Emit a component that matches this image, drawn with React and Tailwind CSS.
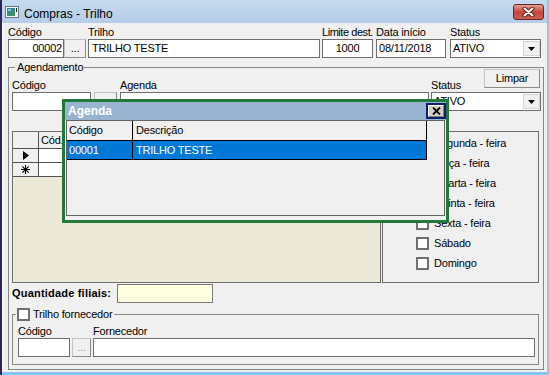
import React from "react";

const FONT = "font-['Liberation_Sans',Arial,sans-serif]";

function DownTri() {
  return (
    <svg width="7" height="4" viewBox="0 0 7 4">
      <path d="M0 0h7L3.5 4z" fill="#000" />
    </svg>
  );
}

function Field({ label, className = "", labelClass = "", children }) {
  return (
    <div className={`flex flex-col ${className}`}>
      <div className={`h-[13px] whitespace-nowrap ${labelClass}`}>{label}</div>
      {children}
    </div>
  );
}

function Input({ className = "", children }) {
  return (
    <div className={`h-[19px] border border-[#6e6e6e] bg-white flex items-center whitespace-nowrap overflow-hidden ${className}`}>
      {children}
    </div>
  );
}

function Select({ className = "", children }) {
  return (
    <div className={`h-[19px] border border-[#6e6e6e] bg-white flex items-center pl-[2px] ${className}`}>
      <span className="flex-1">{children}</span>
      <div className="w-[17px] h-[15px] bg-[#f0f0f0] border border-[#d4d4d4] flex items-center justify-center">
        <DownTri />
      </div>
    </div>
  );
}

function Btn({ className = "", disabled = false, children = "..." }) {
  return (
    <div
      className={`h-[19px] border border-[#c2c2c2] border-r-[#8a8a8a] border-b-[#8a8a8a] bg-[#f0f0f0] flex items-center justify-center ${
        disabled ? "text-[#a0a0a0]" : ""
      } ${className}`}
    >
      {children}
    </div>
  );
}

function Check() {
  return <div className="w-[13px] h-[13px] shrink-0 border-2 border-[#6f6f6f] bg-white" />;
}

function AppIcon() {
  return (
    <svg width="14" height="12" viewBox="0 0 14 12" className="mt-[6px] shrink-0">
      <defs>
        <linearGradient id="ig" x1="0" y1="0" x2="1" y2="1">
          <stop offset="0" stopColor="#2e7bb4" />
          <stop offset="1" stopColor="#3e9a55" />
        </linearGradient>
      </defs>
      <rect x="0.5" y="0.5" width="13" height="11" fill="#f6f6f6" stroke="#6b7683" />
      <rect x="2" y="2" width="8" height="8" fill="url(#ig)" />
      <rect x="3" y="3" width="3" height="2" fill="#8fc6d8" />
      <rect x="11" y="2" width="1" height="4" fill="#222" />
    </svg>
  );
}

function CloseBtn() {
  return (
    <div className="ml-auto mt-[4px] mr-[3px] w-[31px] h-[16px] rounded-[3px] border border-[#6a2520] bg-gradient-to-b from-[#e2a093] via-[#c5463a] to-[#cf5e4e] flex items-center justify-center">
      <svg width="13" height="10" viewBox="0 0 13 10">
        <path d="M2.5 1.5 L10.5 8.5 M10.5 1.5 L2.5 8.5" stroke="#5a1a15" strokeWidth="4" strokeLinecap="round" />
        <path d="M2.5 1.5 L10.5 8.5 M10.5 1.5 L2.5 8.5" stroke="#fff" strokeWidth="2" strokeLinecap="round" />
      </svg>
    </div>
  );
}

function RowTri() {
  return (
    <svg width="6" height="9" viewBox="0 0 6 9">
      <path d="M0 0L6 4.5L0 9z" fill="#000" />
    </svg>
  );
}

function Star() {
  return (
    <svg width="9" height="9" viewBox="0 0 9 9">
      <path d="M4.5 0V9M0 4.5H9M1.3 1.3L7.7 7.7M7.7 1.3L1.3 7.7" stroke="#000" strokeWidth="1.1" />
    </svg>
  );
}

const days = [
  "Segunda - feira",
  "Terça - feira",
  "Quarta - feira",
  "Quinta - feira",
  "Sexta - feira",
  "Sábado",
  "Domingo",
];

export default function App() {
  return (
    <div className={`relative w-[549px] h-[375px] overflow-hidden flex bg-[#f0f0f0] text-[11px] leading-[13px] tracking-[-0.2px] text-black ${FONT}`}>
      <div className="w-[2px] h-full shrink-0 bg-[#2e2455]" />
      <div className="flex-1 min-w-0 flex flex-col">
        <div className="flex-1 min-h-0 flex">
          <div className="flex-1 min-w-0 flex flex-col">
            {/* Title bar */}
            <div className="h-[23px] shrink-0 flex items-start pl-[3px] bg-gradient-to-b from-[#c6daef] to-[#b5cde8]">
              <AppIcon />
              <span className="ml-[5px] mt-[7px] text-[12px] leading-[14px] tracking-normal">Compras - Trilho</span>
              <CloseBtn />
            </div>

            {/* Client */}
            <div className="flex-1 min-h-0 border-l border-[#fafafa] pl-[5px] pt-[3px] flex flex-col">
              {/* top row */}
              <div className="flex items-end">
                <Field label="Código" className="w-[56px]">
                  <Input className="justify-end pr-[1px]">00002</Input>
                </Field>
                <Btn className="w-[22px]" />
                <Field label="Trilho" className="ml-[2px] w-[232px]">
                  <Input className="pl-[3px]">TRILHO TESTE</Input>
                </Field>
                <Field label="Limite dest." labelClass="tracking-[-0.45px]" className="ml-[2px] w-[51px]">
                  <Input className="justify-center">1000</Input>
                </Field>
                <Field label="Data início" className="ml-[3px] w-[70px]">
                  <Input className="pl-[2px]">08/11/2018</Input>
                </Field>
                <Field label="Status" className="ml-[4px] w-[91px]">
                  <Select>ATIVO</Select>
                </Field>
              </div>

              {/* Agendamento group */}
              <fieldset className="mt-[3px] w-[536px] min-w-0 border border-[#868686]">
                <legend className="ml-[6px] pl-[2px] pr-[1px] leading-[13px]">Agendamento</legend>
                <div className="pl-[3px] pb-[4px] flex flex-col">
                  <div className="-mt-[5px] flex items-end">
                    <Field label="Código" className="w-[79px]">
                      <Input />
                    </Field>
                    <Btn className="ml-[3px] w-[23px]" />
                    <Field label="Agenda" className="ml-[3px] w-[309px]">
                      <Input />
                    </Field>
                    <div className="ml-[2px] w-[110px] flex flex-col">
                      <div className="flex items-end justify-between">
                        <span className="h-[13px]">Status</span>
                        <Btn className="w-[56px] h-[18px] mb-[4px] mr-[1px]">Limpar</Btn>
                      </div>
                      <Select>ATIVO</Select>
                    </div>
                  </div>

                  {/* grid + days */}
                  <div className="mt-[20px] flex gap-[1px]">
                    <div className="w-[369px] h-[152px] border border-[#6d6d6d] bg-[#ece9d8] flex flex-col overflow-hidden">
                      <div className="flex h-[17px] shrink-0">
                        <div className="w-[26px] border-r border-b border-[#505050] bg-[#f0f0f0]" />
                        <div className="w-[130px] border-r border-b border-[#505050] bg-[#f0f0f0] pl-[2px] flex items-center">Cód.</div>
                      </div>
                      <div className="flex h-[14px] shrink-0">
                        <div className="w-[26px] border-r border-b border-[#505050] bg-[#f0f0f0] flex items-center justify-center pl-[1px]">
                          <RowTri />
                        </div>
                        <div className="w-[130px] border-r border-b border-[#505050] bg-white" />
                      </div>
                      <div className="flex h-[14px] shrink-0">
                        <div className="w-[26px] border-r border-b border-[#505050] bg-[#f0f0f0] flex items-center justify-center">
                          <Star />
                        </div>
                        <div className="w-[130px] border-r border-b border-[#505050] bg-white" />
                      </div>
                    </div>
                    <div className="w-[157px] h-[152px] border border-[#6d6d6d] pl-[33px] pt-[1px] flex flex-col">
                      {days.map((d) => (
                        <div key={d} className="h-[20px] flex items-center gap-[5px] whitespace-nowrap">
                          <Check />
                          <span>{d}</span>
                        </div>
                      ))}
                    </div>
                  </div>

                  {/* Quantidade filiais */}
                  <div className="mt-[1px] flex items-center">
                    <span className="w-[105px] font-bold tracking-[0.2px] whitespace-nowrap">Quantidade filiais:</span>
                    <div className="w-[96px] h-[19px] border border-[#7a7a7a] bg-[#fffee1]" />
                  </div>

                  {/* Trilho fornecedor group */}
                  <fieldset className="mt-[5px] w-[527px] min-w-0 border border-[#868686]">
                    <legend className="ml-[3px] pl-[1px] pr-[2px] leading-[13px]">
                      <div className="flex items-center gap-[3px] h-[13px]">
                        <Check />
                        <span>Trilho fornecedor</span>
                      </div>
                    </legend>
                    <div className="pl-[5px] pb-[7px] flex items-end">
                      <Field label="Código" className="mt-[4px] w-[52px]">
                        <Input />
                      </Field>
                      <Btn disabled className="ml-[2px] w-[19px]" />
                      <Field label="Fornecedor" className="ml-[2px] w-[442px]">
                        <Input />
                      </Field>
                    </div>
                  </fieldset>
                </div>
              </fieldset>
            </div>
          </div>
          <div className="w-[2px] shrink-0 bg-[#86c6ec]" />
        </div>
        <div className="h-[3px] shrink-0 bg-[#86c6ec]" />
      </div>

      {/* Agenda dialog overlay */}
      <div className="absolute left-[62px] top-[99px] w-[387px] h-[124px] border-[3px] border-[#217a3a] bg-[#f0f0f0] flex flex-col">
        <div className="h-[18px] shrink-0 bg-[#99b4d1] flex items-center pl-[3px]">
          <span className="text-white font-bold text-[12px] leading-[14px] tracking-normal -mt-[1px]">Agenda</span>
          <div className="ml-auto w-[20px] h-[16px] border-2 border-[#0d1f6b] bg-[#d4d0c8] flex">
            <div className="flex-1 border border-t-white border-l-white border-r-[#808080] border-b-[#808080] flex items-center justify-center">
              <svg width="9" height="8" viewBox="0 0 9 8">
                <path d="M1 0.5L8 7.5M8 0.5L1 7.5" stroke="#000" strokeWidth="1.8" />
              </svg>
            </div>
          </div>
        </div>
        <div className="mx-[1px] h-[96px] border border-[#646464] flex flex-col">
          <div className="flex h-[20px] shrink-0">
            <div className="w-[66px] border-r border-b border-black pl-[2px] flex items-center">Código</div>
            <div className="w-[294px] border-r border-b border-black pl-[3px] flex items-center">Descrição</div>
          </div>
          <div className="flex h-[19px] shrink-0 text-white">
            <div className="w-[66px] border-r border-b border-black bg-[#0078d7] pl-[2px] flex items-center">00001</div>
            <div className="w-[294px] border-r border-b border-black bg-[#0078d7] pl-[3px] flex items-center">TRILHO TESTE</div>
          </div>
        </div>
      </div>
    </div>
  );
}
